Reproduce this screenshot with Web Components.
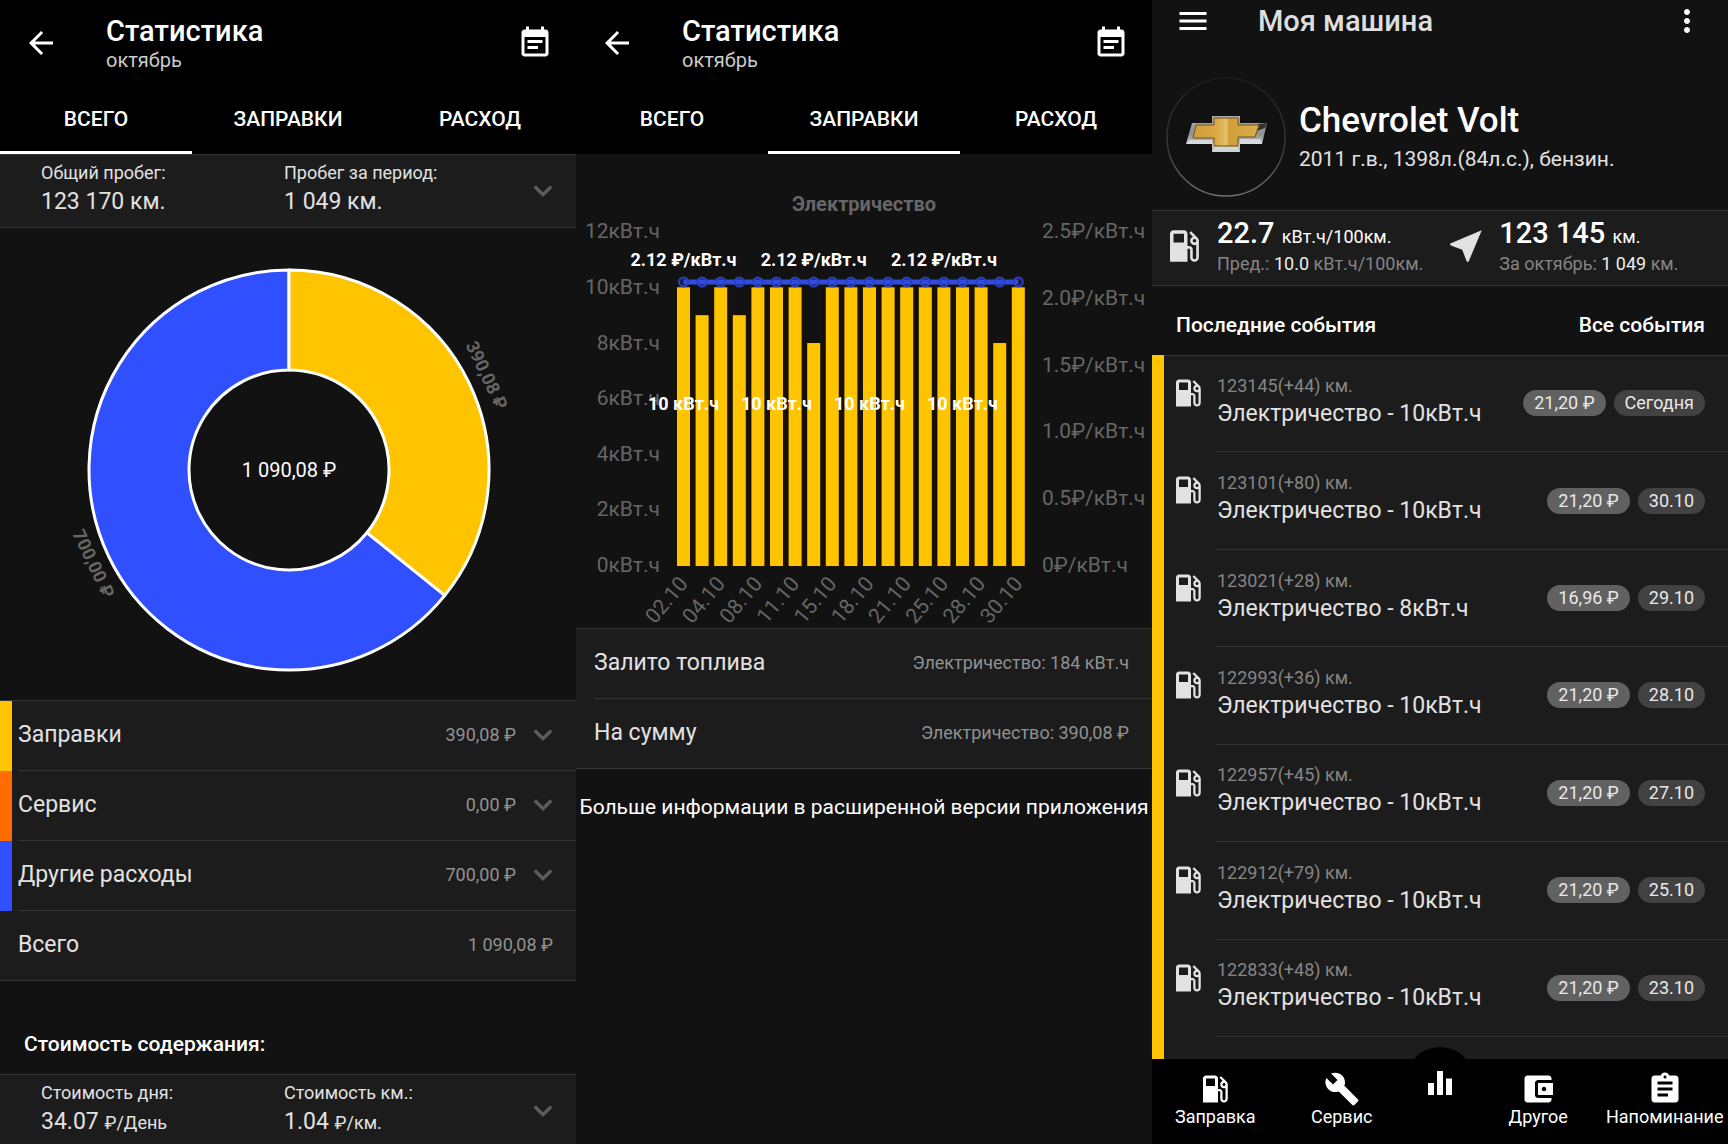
<!DOCTYPE html>
<html lang="ru">
<head>
<meta charset="utf-8">
<meta name="viewport" content="width=device-width, initial-scale=1">
<title>Статистика автомобиля</title>
<style>
  :root {
    --bg: #121212; --surface: #1c1c1c; --line: #353535;
    --text: #e2e2e2; --muted: #919191; --dim: #666;
    --yellow: #ffc400; --orange: #ff6d00; --blue: #304ffe;
    --fs-s: 18px; --fs-m: 21px; --fs-l: 23px; --fs-xl: 29px;
  }
  body {
    margin: 0; background: var(--bg); color: var(--text);
    font-family: Roboto, "Noto Sans", sans-serif; font-size: var(--fs-m);
    display: grid; grid-template-columns: repeat(3, minmax(0, 1fr));
    height: 100vh; overflow: hidden;
  }
</style>
</head>
<body>
<total-screen></total-screen>
<refuel-screen></refuel-screen>
<car-screen></car-screen>

<script>
const define = (name, render) => customElements.define(name, class extends HTMLElement {
  connectedCallback() {
    if (this.shadowRoot) return;
    this.attachShadow({ mode: 'open' }).innerHTML = render(this);
  }
});

/* Icons, 24-unit grid */
const ICONS = {
  back: '<path d="M20 11H7.83l5.59-5.59L12 4l-8 8 8 8 1.41-1.41L7.83 13H20v-2z"/>',
  calendar: '<path d="M17 10H7v2h10v-2zm2-7h-1V1h-2v2H8V1H6v2H5c-1.11 0-1.99.9-1.99 2L3 19c0 1.1.89 2 2 2h14c1.1 0 2-.9 2-2V5c0-1.1-.9-2-2-2zm0 16H5V8h14v11zm-5-5H7v2h7v-2z"/>',
  menu: '<path d="M3 18h18v-2H3v2zm0-5h18v-2H3v2zm0-7v2h18V6H3z"/>',
  more: '<path d="M12 8c1.1 0 2-.9 2-2s-.9-2-2-2-2 .9-2 2 .9 2 2 2zm0 2c-1.1 0-2 .9-2 2s.9 2 2 2 2-.9 2-2-.9-2-2-2zm0 6c-1.1 0-2 .9-2 2s.9 2 2 2 2-.9 2-2-.9-2-2-2z"/>',
  gas: '<path d="M19.77 7.23l.01-.01-3.72-3.72L15 4.56l2.11 2.11c-.94.36-1.61 1.26-1.61 2.33 0 1.38 1.12 2.5 2.5 2.5.36 0 .69-.08 1-.21v7.21c0 .55-.45 1-1 1s-1-.45-1-1V14c0-1.1-.9-2-2-2h-1V5c0-1.1-.9-2-2-2H6c-1.1 0-2 .9-2 2v16h10v-7.5h1.5v5c0 1.38 1.12 2.5 2.5 2.5s2.5-1.12 2.5-2.5V9c0-.69-.28-1.32-.73-1.77zM12 10H6V5h6v5zm6 0c-.55 0-1-.45-1-1s.45-1 1-1 1 .45 1 1-.45 1-1 1z"/>',
  near: '<path d="M21 3L3 10.53v.98l6.84 2.65L12.48 21h.98L21 3z"/>',
  wrench: '<path d="M22.7 19l-9.1-9.1c.9-2.3.4-5-1.5-6.9-2-2-5-2.4-7.4-1.3L9 6 6 9 1.6 4.7C.4 7.1.9 10.1 2.9 12.1c1.9 1.9 4.6 2.4 6.9 1.5l9.1 9.1c.4.4 1 .4 1.4 0l2.3-2.3c.5-.4.5-1.1.1-1.4z"/>',
  bars: '<path d="M10 20h4V4h-4v16zm-6 0h4v-8H4v8zM16 9v11h4V9h-4z"/>',
  wallet: '<path d="M21 18v1c0 1.1-.9 2-2 2H5c-1.11 0-2-.9-2-2V5c0-1.1.89-2 2-2h14c1.1 0 2 .9 2 2v1h-9c-1.11 0-2 .9-2 2v8c0 1.1.89 2 2 2h9zm-9-2h10V8H12v8zm4-2.5c-.83 0-1.5-.67-1.5-1.5s.67-1.5 1.5-1.5 1.5.67 1.5 1.5-.67 1.5-1.5 1.5z"/>',
  clipboard: '<path d="M19 3h-4.18C14.4 1.84 13.3 1 12 1c-1.3 0-2.4.84-2.82 2H5c-1.1 0-2 .9-2 2v14c0 1.1.9 2 2 2h14c1.1 0 2-.9 2-2V5c0-1.1-.9-2-2-2zm-7 0c.55 0 1 .45 1 1s-.45 1-1 1-1-.45-1-1 .45-1 1-1zm2 14H7v-2h7v2zm3-4H7v-2h10v2zm0-4H7V7h10v2z"/>',
  chevron: '<path d="M6.5 9l5.5 5.5L17.5 9" fill="none" stroke="currentColor" stroke-width="2.2"/>'
};
define('app-icon', el => `
  <style>:host{display:block;flex:none;width:var(--icon-size,36px);height:var(--icon-size,36px)}
  svg{display:block;width:100%;height:100%;fill:currentColor}</style>
  <svg viewBox="0 0 24 24" aria-hidden="true">${ICONS[el.getAttribute('name')]}</svg>`);

const BUTTON = 'button{font:inherit;color:inherit;background:none;border:0;padding:0;margin:0;text-align:inherit;cursor:pointer}';

/* App bar with the statistics tabs */
define('stats-header', el => {
  const active = +el.getAttribute('active');
  return `
  <style>
    :host{display:block;background:#000;color:#fff}
    ${BUTTON}
    .bar{display:flex;align-items:center;height:86px;padding:0 23px}
    .titles{flex:1;margin-left:47px}
    h1{margin:0;font-size:var(--fs-xl);line-height:34px;font-weight:500}
    p{margin:0;font-size:20px;line-height:24px;color:#ccc}
    nav{display:grid;grid-template-columns:repeat(3,1fr);height:68px}
    nav button{text-align:center;font-weight:500;border-bottom:3px solid transparent;box-sizing:border-box}
    nav button[aria-selected=true]{border-color:#fff}
  </style>
  <div class="bar">
    <button aria-label="Назад"><app-icon name="back"></app-icon></button>
    <div class="titles"><h1>Статистика</h1><p>октябрь</p></div>
    <button aria-label="Период"><app-icon name="calendar"></app-icon></button>
  </div>
  <nav role="tablist">${['ВСЕГО', 'ЗАПРАВКИ', 'РАСХОД'].map((t, i) =>
    `<button role="tab" aria-selected="${i === active}">${t}</button>`).join('')}</nav>`;
});

/* Two labelled figures with an expander */
define('summary-pair', el => {
  const a = n => el.getAttribute(n) || '';
  const cell = i => `<span class="cell"><span class="label">${a('label' + i)}</span><span class="value">${a('value' + i)}${a('unit' + i) ? ` <small>${a('unit' + i)}</small>` : ''}</span></span>`;
  return `
  <style>
    :host{display:block;background:var(--surface);border:solid var(--line);border-width:1px 0}
    ${BUTTON}
    .row{display:flex;align-items:center;width:100%;box-sizing:border-box;padding:7px 15px 11px 41px}
    .cell:first-child{flex:0 0 243px}
    .label,.value{display:block}
    .label{font-size:var(--fs-s);line-height:22px}
    .value{font-size:var(--fs-l);line-height:28px;margin-top:4px}
    small{font-size:var(--fs-s);line-height:1}
    app-icon{margin:3px 0 0 auto;color:#5c5c5c}
  </style>
  <button class="row">${cell(1)}${cell(2)}<app-icon name="chevron"></app-icon></button>`;
});

/* Row of name and amount */
define('amount-row', el => `
  <style>
    :host{display:block}
    .row{display:flex;align-items:stretch;height:70px}
    .stripe{flex:none;width:12px;background:var(--stripe,transparent)}
    .main{flex:1;display:flex;align-items:center;margin-left:6px;padding:0 23px 1px 0;border-bottom:1px solid var(--line)}
    :host(:last-of-type) .row{box-shadow:inset 0 -1px var(--line)}
    .name{flex:1;font-size:var(--fs-l);line-height:28px}
    .sum{font-size:var(--fs-s);line-height:22px;color:var(--muted)}
    app-icon{margin:0 -8px 0 9px;color:#5c5c5c}
  </style>
  <div class="row"><div class="stripe"></div><div class="main">
    <span class="name"><slot></slot></span><span class="sum">${el.getAttribute('sum')}</span>
    ${el.hasAttribute('more') ? '<app-icon name="chevron"></app-icon>' : ''}
  </div></div>`);

/* Expense ring */
define('expense-ring', () => {
  const cx = 289, cy = 242, R = 200, r = 100, turn = 390.08 / 1090.08 * 2 * Math.PI;
  const pt = (rad, a) => `${cx + rad * Math.sin(a)} ${cy - rad * Math.cos(a)}`;
  const slice = (a, b, color) => {
    const big = b - a > Math.PI ? 1 : 0;
    return `<path fill="${color}" d="M${pt(R, a)}A${R} ${R} 0 ${big} 1 ${pt(R, b)}L${pt(r, b)}A${r} ${r} 0 ${big} 0 ${pt(r, a)}Z"/>`;
  };
  const label = (rad, a, text) => {
    const deg = turn / 2 * 180 / Math.PI;
    return `<g transform="translate(${pt(rad, a)}) rotate(${deg})"><text class="out" text-anchor="middle" dy="6">${text}</text></g>`;
  };
  return `
  <style>:host{display:block}svg{display:block;width:100%}
    path{stroke:#fff;stroke-width:3;stroke-linejoin:round}
    text{font-size:20px;fill:#fff} .out{font-size:18px;font-weight:700;fill:var(--dim)}</style>
  <svg viewBox="0 0 576 472" role="img" aria-label="Расходы">
    ${slice(turn, 2 * Math.PI, 'var(--blue)')}${slice(0, turn, 'var(--yellow)')}
    <text x="${cx}" y="${cy + 7}" text-anchor="middle">1 090,08 ₽</text>
    ${label(219, turn / 2, '390,08 ₽')}${label(217, turn / 2 + Math.PI, '700,00 ₽')}
  </svg>`;
});

/* Refuelling bars with the price line */
define('refuel-chart', () => {
  const values = [10, 9, 10, 9, 10, 10, 10, 8, 10, 10, 10, 10, 10, 10, 10, 10, 10, 8, 10];
  const dates = ['02.10', '04.10', '08.10', '11.10', '15.10', '18.10', '21.10', '25.10', '28.10', '30.10'];
  const X = i => 107.5 + i * 18.6, base = 412, unit = 27.87, lineY = 128;
  const bars = values.map((v, i) => `<rect class="bar" x="${X(i) - 6.5}" y="${base - v * unit}" width="13" height="${v * unit}"/>`).join('');
  const dots = values.map((v, i) => `<circle cx="${X(i)}" cy="${lineY}" r="4.5"/>`).join('');
  const left = [0, 2, 4, 6, 8, 10, 12].map(v => `<text class="axis" text-anchor="end" x="84" y="${418 - v * 27.8}">${v}кВт.ч</text>`).join('');
  const right = ['0', '0.5', '1.0', '1.5', '2.0', '2.5'].map((v, i) => `<text class="axis" x="466" y="${418 - i * 66.8}">${v}₽/кВт.ч</text>`).join('');
  const days = dates.map((d, i) => `<g transform="translate(${X(i * 2) - 17} 446) rotate(-50)"><text class="axis" text-anchor="middle" dy="7">${d}</text></g>`).join('');
  return `
  <style>:host{display:block}svg{display:block;width:100%}
    .axis{font-size:21px;fill:var(--dim)} .title{font-size:20px;font-weight:700;fill:var(--dim)}
    .val{font-size:18px;font-weight:700;fill:#fff}
    .bar{fill:var(--yellow);stroke:#181004;stroke-width:5;paint-order:stroke} line{stroke:#304be0;stroke-width:5}
    circle{fill:#304ffe33;stroke:#2c41bd;stroke-width:2}</style>
  <svg viewBox="0 0 576 474" role="img" aria-label="Электричество">
    <text class="title" x="288" y="57" text-anchor="middle">Электричество</text>
    ${left}${right}${bars}
    <line x1="${X(0)}" y1="${lineY}" x2="${X(18)}" y2="${lineY}"/>${dots}
    ${[0, 7, 14].map(i => `<text class="val" text-anchor="middle" x="${X(i)}" y="112">2.12 ₽/кВт.ч</text>`).join('')}
    ${[0, 5, 10, 15].map(i => `<text class="val" text-anchor="middle" x="${X(i)}" y="256">10 кВт.ч</text>`).join('')}
    ${days}
  </svg>`;
});

define('total-screen', () => `
  <style>
    :host{display:block;overflow:hidden}
    section{background:var(--surface);border-top:1px solid var(--line)}
    h2{margin:0;padding:51px 24px 18px;font-size:var(--fs-m);line-height:24px;font-weight:500;color:#fff}
  </style>
  <stats-header active="0"></stats-header>
  <summary-pair label1="Общий пробег:" value1="123 170 км." label2="Пробег за период:" value2="1 049 км."></summary-pair>
  <expense-ring></expense-ring>
  <section>
    <amount-row style="--stripe:var(--yellow)" sum="390,08 ₽" more>Заправки</amount-row>
    <amount-row style="--stripe:var(--orange)" sum="0,00 ₽" more>Сервис</amount-row>
    <amount-row style="--stripe:var(--blue)" sum="700,00 ₽" more>Другие расходы</amount-row>
    <amount-row sum="1 090,08 ₽">Всего</amount-row>
  </section>
  <h2>Стоимость содержания:</h2>
  <summary-pair label1="Стоимость дня:" value1="34.07" unit1="₽/День" label2="Стоимость км.:" value2="1.04" unit2="₽/км."></summary-pair>`);

define('refuel-screen', () => `
  <style>
    :host{display:block;overflow:hidden}
    section{background:var(--surface);border-top:1px solid var(--line)}
    p{margin:0;padding:26px 0;font-size:var(--fs-m);line-height:24px;color:#fff;display:flex;justify-content:center;white-space:nowrap}
  </style>
  <stats-header active="1"></stats-header>
  <refuel-chart></refuel-chart>
  <section>
    <amount-row sum="Электричество: 184 кВт.ч">Залито топлива</amount-row>
    <amount-row sum="Электричество: 390,08 ₽">На сумму</amount-row>
  </section>
  <p>Больше информации в расширенной версии приложения</p>`);

/* Round badge with the maker's emblem */
define('car-emblem', () => `
  <style>:host{display:block;flex:none;width:120px;height:120px}svg{display:block;width:100%;height:100%}</style>
  <svg viewBox="0 0 120 120" role="img" aria-label="Chevrolet">
    <defs>
      <linearGradient id="ring" x1="0" y1="0" x2="0" y2="1"><stop offset="0" stop-color="#1c1c1c"/><stop offset=".6" stop-color="#383838"/><stop offset="1" stop-color="#707070"/></linearGradient>
      <linearGradient id="steel" x1="0" y1="0" x2="0" y2="1"><stop offset="0" stop-color="#a9acaf"/><stop offset=".5" stop-color="#8d9094"/><stop offset=".8" stop-color="#c8ccd0"/><stop offset="1" stop-color="#9a9da1"/></linearGradient>
      <linearGradient id="gold" x1="0" y1="0" x2="1" y2="0"><stop offset="0" stop-color="#cf9c38"/><stop offset=".35" stop-color="#d9a845"/><stop offset=".52" stop-color="#e6c06a"/><stop offset=".53" stop-color="#cf9f3a"/><stop offset="1" stop-color="#dcae4c"/></linearGradient>
    </defs>
    <circle cx="60" cy="60" r="59" fill="#111" stroke="url(#ring)" stroke-width="1.5"/>
    <path fill="url(#steel)" d="M26 46H46V39H74V46H101L96 67H74V75H46V67H20Z"/>
    <path fill="#e3e6e8" d="M48 70h24l2 5H46zM20 67l4-4h22v4zM74 62h20l2 5H74z" opacity=".7"/>
    <path fill="#333" d="M92 47l9-1-2 5-8 3z"/>
    <path fill="url(#gold)" stroke="#765414" stroke-width="1" d="M30 48H48V41H72V48H93L89 60H72V69H48V61H27Z"/>
  </svg>`);

/* One event of the log */
define('event-row', el => `
  <style>
    :host{display:flex}
    app-icon{margin:20px 10px 0 6px;color:#e2e2e2}
    .main{flex:1;display:flex;align-items:center;padding-left:1px;padding-right:23px;gap:8px;border-bottom:1px solid var(--line)}
    .text{flex:1;padding-bottom:4px;white-space:nowrap}
    .km{font-size:var(--fs-s);line-height:22px;color:#858585}
    .what{font-size:var(--fs-l);line-height:28px;margin-top:3px}
    .chip{font-size:var(--fs-s);line-height:26px;border-radius:13px;padding:0 11px;background:#424242;color:#e8e8e8;white-space:nowrap}
    .sum{background:#616161}
  </style>
  <app-icon name="gas"></app-icon>
  <div class="main">
    <div class="text"><div class="km">${el.getAttribute('km')} км.</div><div class="what"><slot></slot></div></div>
    <span class="chip sum">${el.getAttribute('sum')}</span><span class="chip">${el.getAttribute('day')}</span>
  </div>`);

/* Bottom navigation */
define('bottom-nav', () => `
  <style>
    :host{display:block;position:relative;background:#000;color:#fff}
    ${BUTTON}
    nav{display:grid;grid-template-columns:1fr 1fr 70px 1fr 1fr;height:85px;position:relative}
    button{display:flex;flex-direction:column;align-items:center;font-size:var(--fs-s);line-height:22px;padding:12px 0 0;white-space:nowrap}
    button app-icon{margin-bottom:-1px}
    .mid{padding-top:6px}
    .bump{position:absolute;left:50%;top:-12px;width:68px;height:68px;margin-left:-34px;border-radius:50%;background:#000}
  </style>
  <div class="bump"></div>
  <nav>
    <button><app-icon name="gas"></app-icon>Заправка</button>
    <button><app-icon name="wrench"></app-icon>Сервис</button>
    <button class="mid" aria-label="Статистика"><app-icon name="bars"></app-icon></button>
    <button><app-icon name="wallet"></app-icon>Другое</button>
    <button><app-icon name="clipboard"></app-icon>Напоминание</button>
  </nav>`);

const EVENTS = [
  ['123145(+44)', '10', '21,20 ₽', 'Сегодня'], ['123101(+80)', '10', '21,20 ₽', '30.10'],
  ['123021(+28)', '8', '16,96 ₽', '29.10'], ['122993(+36)', '10', '21,20 ₽', '28.10'],
  ['122957(+45)', '10', '21,20 ₽', '27.10'], ['122912(+79)', '10', '21,20 ₽', '25.10'],
  ['122833(+48)', '10', '21,20 ₽', '23.10']
];
define('car-screen', () => `
  <style>
    :host{display:flex;flex-direction:column;height:100vh;overflow:hidden}
    ${BUTTON}
    header{display:flex;align-items:center;height:41px;padding:0 23px;color:#fff;flex:none}
    h1{flex:1;margin:0 0 0 47px;font-size:var(--fs-xl);line-height:34px;font-weight:500;color:#dedede}
    .profile{display:flex;align-items:center;gap:13px;padding:36px 14px 13px;flex:none}
    .profile div{padding-bottom:4px}
    h2{margin:0;font-size:35px;line-height:44px;font-weight:500;color:#fff}
    .profile p{margin:4px 0 0;font-size:var(--fs-m);line-height:24px}
    .stats{display:flex;background:var(--surface);border:solid var(--line);border-width:1px 0;padding:5px 0 10px;flex:none;--icon-size:42px}
    .stat{display:flex;align-items:center;gap:12px;padding-left:11px;flex:0 0 49%;box-sizing:border-box}
    .stat p{margin:0;white-space:nowrap}
    .stat .now{font-size:var(--fs-xl);line-height:34px;font-weight:500;color:#fff}
    .now small{font-size:var(--fs-s);line-height:1;font-weight:400}
    .stat .prev{font-size:var(--fs-s);line-height:22px;margin-top:3px;color:#858585}
    .prev span{color:#eee}
    .head{display:flex;justify-content:space-between;padding:27px 23px 18px 24px;line-height:24px;flex:none;color:#fff;font-weight:500}
    .head h3{margin:0;font-size:var(--fs-m);font-weight:500}
    .head a{color:inherit;text-decoration:none}
    .list{flex:1;min-height:0;overflow:hidden;background:var(--surface);box-shadow:inset 0 1px var(--line);border-left:12px solid var(--yellow)}
    .rows{display:grid;grid-auto-rows:1fr;min-height:682px}
    bottom-nav{flex:none}
  </style>
  <header>
    <button aria-label="Меню"><app-icon name="menu"></app-icon></button>
    <h1>Моя машина</h1>
    <button aria-label="Ещё"><app-icon name="more"></app-icon></button>
  </header>
  <div class="profile"><car-emblem></car-emblem><div><h2>Chevrolet Volt</h2><p>2011 г.в., 1398л.(84л.с.), бензин.</p></div></div>
  <div class="stats">
    <div class="stat"><app-icon name="gas"></app-icon><div>
      <p class="now">22.7 <small>кВт.ч/100км.</small></p><p class="prev">Пред.: <span>10.0</span> кВт.ч/100км.</p></div></div>
    <div class="stat"><app-icon name="near"></app-icon><div>
      <p class="now">123 145 <small>км.</small></p><p class="prev">За октябрь: <span>1 049</span> км.</p></div></div>
  </div>
  <div class="head"><h3>Последние события</h3><a href="#all">Все события</a></div>
  <div class="list"><div class="rows">${EVENTS.map(([km, n, sum, day]) =>
    `<event-row km="${km}" sum="${sum}" day="${day}">Электричество - ${n}кВт.ч</event-row>`).join('')}</div></div>
  <bottom-nav></bottom-nav>`);
</script>
</body>
</html>
